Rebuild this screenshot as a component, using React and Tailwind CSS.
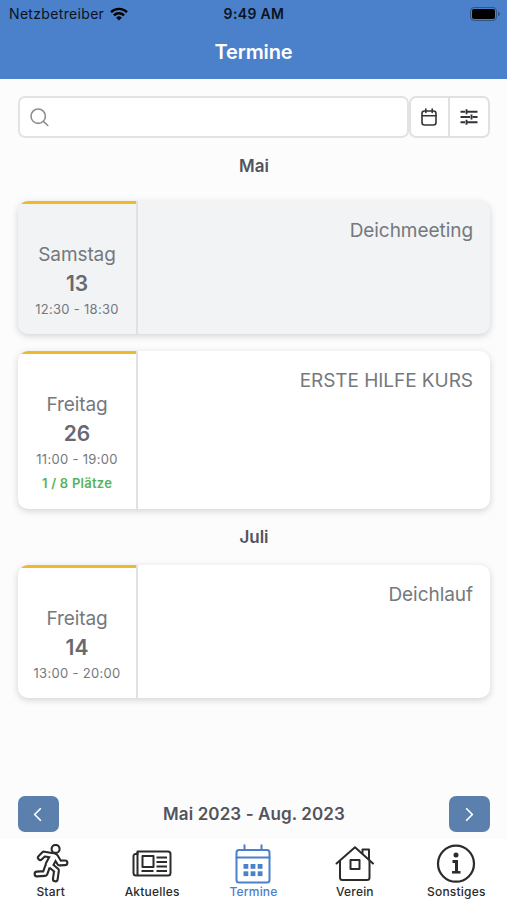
import { ChevronLeft, ChevronRight } from "lucide-react";

const months = [
  {
    name: "Mai",
    events: [
      { day: "Samstag", date: "13", time: "12:30 - 18:30", title: "Deichmeeting", past: true },
      { day: "Freitag", date: "26", time: "11:00 - 19:00", title: "ERSTE HILFE KURS", seats: "1 / 8 Plätze" },
    ],
  },
  {
    name: "Juli",
    events: [{ day: "Freitag", date: "14", time: "13:00 - 20:00", title: "Deichlauf" }],
  },
];

const RunnerIcon = () => {
  // each limb is drawn twice, so that the wide dark line outlines the white one
  const limbs = "M7.3 13.6 L11 10 L20 11.5 M14.5 22.5 L12 29.5 L4 30 M17 21 L23.5 26.5 L22.3 35 M22.5 12.5 L26.5 19 L32 18.8";
  return (
    <svg className="ml-px" width="37" height="40" viewBox="0 0 37 40" fill="none" strokeLinecap="round" strokeLinejoin="round">
      <path d={limbs} stroke="#2b2b2b" strokeWidth="6.8" />
      <path d="M20.5 13 L16.5 20.5" stroke="#2b2b2b" strokeWidth="9.6" />
      <path d={limbs} stroke="#fff" strokeWidth="2.6" />
      <path d="M20.5 13 L16.5 20.500" stroke="#fff" strokeWidth="5.4" />
      <circle cx="22.600" cy="4.900" r="4" fill="#fff" stroke="#2b2b2b" strokeWidth="2.1" />
    </svg>
  );
};

const NewsIcon = () => (
  <svg width="40" height="40" viewBox="0 0 40 40" fill="none" stroke="#2b2b2b" strokeWidth="2" strokeLinejoin="round">
    <path d="M5.500 7.500 H36 a2.500 2.500 0 0 1 2.500 2.500 V29 a2.500 2.500 0 0 1 -2.500 2.500 H4 a2.500 2.500 0 0 1 -2.500 -2.500 V12 a2 2 0 0 1 2 -2 H5.500 Z" />
    <path d="M5.500 8 V31" />
    <rect x="10.500" y="12" width="11" height="11" />
    <path d="M24.500 13.500 H35 M24.500 18 H35 M24.500 22.500 H35 M9.500 27 H21.500 M24.500 27 H35" />
  </svg>
);

const CalendarIcon = () => (
  <svg width="36" height="40" viewBox="0 0 36 40" fill="none" stroke="#4b80cb" strokeWidth="2" strokeLinecap="round">
    <rect x="1.500" y="6" width="33" height="32.500" rx="2.500" />
    <path d="M1.500 13.500 H34.500 M9.500 1.200 V6 M26.500 1.200 V6" />
    <g fill="#4b80cb" stroke="none">
      <rect x="8.500" y="20" width="4.800" height="4.800" />
      <rect x="15.600" y="20" width="4.800" height="4.800" />
      <rect x="22.700" y="20" width="4.800" height="4.800" />
      <rect x="8.500" y="27.300" width="4.800" height="4.800" />
      <rect x="15.600" y="27.300" width="4.800" height="4.800" />
      <rect x="22.700" y="27.300" width="4.800" height="4.800" />
    </g>
  </svg>
);

const HouseIcon = () => (
  <svg width="40" height="40" viewBox="0 0 40 40" fill="none" stroke="#2b2b2b" strokeWidth="2" strokeLinecap="round" strokeLinejoin="round">
    <path d="M1.500 19.500 L20 3.300 L38 19.500" />
    <path d="M5 17 V33.500 a2.500 2.500 0 0 0 2.500 2.500 H32 a2.500 2.500 0 0 0 2.500 -2.500 V17" />
    <path d="M27.500 9 V5.500 H34 V15" />
    <rect x="15.500" y="16" width="9" height="9" />
  </svg>
);

const InfoIcon = () => (
  <svg width="40" height="40" viewBox="0 0 40 40" fill="none" stroke="#2b2b2b">
    <circle cx="20" cy="19.700" r="18" strokeWidth="2.2" />
    <circle cx="20" cy="11" r="2.500" fill="#2b2b2b" stroke="none" />
    <path d="M16.500 17.500 H20.500 V28.500" strokeWidth="3" />
    <path d="M16 28.300 H24.500" strokeWidth="2.500" />
  </svg>
);

const tabs = [
  { label: "Start", icon: <RunnerIcon /> },
  { label: "Aktuelles", icon: <NewsIcon /> },
  { label: "Termine", icon: <CalendarIcon />, active: true },
  { label: "Verein", icon: <HouseIcon /> },
  { label: "Sonstiges", icon: <InfoIcon /> },
];

function Header() {
  return (
    <header className="h-[79px] bg-[#4b80cb]">
      <div className="grid h-[27px] grid-cols-3 items-center pl-[9px] pr-[7px] text-[14px] text-[#0b1320]">
        <div className="flex items-center gap-1.5 tracking-[0.33px]">
          Netzbetreiber
          <svg width="18" height="14" viewBox="0 0 18 14" fill="none" stroke="#000" strokeWidth="2.4">
            <path d="M1 5.200 a11.300 11.300 0 0 1 16 0" />
            <path d="M3.900 8.400 a7.200 7.200 0 0 1 10.200 0" />
            <path d="M9 13.500 L6.200 10.700 a4 4 0 0 1 5.600 0 Z" fill="#000" stroke="none" />
          </svg>
        </div>
        <div className="pr-px text-center font-semibold tracking-[0.35px]">9:49 AM</div>
        <div className="flex items-center justify-end gap-px">
          <div className="h-[14px] w-[27px] rounded-[4px] border border-[#315587] p-px">
            <div className="h-full rounded-[2px] bg-black" />
          </div>
          <div className="h-1 w-[2px] rounded-r-full bg-[#315587]" />
        </div>
      </div>
      <h1 className="pt-[10px] text-center text-[20px] leading-[30px] font-semibold tracking-[-0.15px] text-white">Termine</h1>
    </header>
  );
}

function SearchBar() {
  return (
    <div className="flex h-[42px]">
      <div className="flex flex-1 items-center rounded-[7px] border-2 border-[#e2e3e4] bg-white pl-[10px]">
        <svg width="19" height="19" viewBox="0 0 19 19" fill="none" stroke="#8e8e92" strokeWidth="1.6" strokeLinecap="round">
          <circle cx="8.200" cy="8.200" r="7.200" />
          <path d="M13.400 13.400 L17.800 17.500" />
        </svg>
      </div>
      <button className="flex w-[41px] items-center justify-center rounded-l-[7px] border-2 border-[#dfe1e3] bg-white pr-px">
        <svg width="16" height="18" viewBox="0 0 16 18" fill="none" stroke="#333438" strokeWidth="1.6" strokeLinecap="round">
          <rect x="1" y="3" width="14" height="14" rx="2.500" />
          <path d="M1 7.700 H15 M4.800 1 V4.500 M11.200 1 V4.500" />
        </svg>
      </button>
      <button className="flex w-10 items-center justify-center rounded-r-[7px] border-2 border-l-0 border-[#dfe1e3] bg-white">
        <svg width="18" height="16" viewBox="0 0 18 16" fill="none" stroke="#333438" strokeWidth="1.9">
          <path d="M0.500 2.800 H5 M6.500 2.800 H17.500 M0.500 8 H10 M12.500 8 H17.500 M0.500 13.200 H5 M6.500 13.200 H17.500" />
          <path d="M6.500 0.300 V5.300 M11.500 5.500 V10.500 M6.500 10.700 V15.700" />
        </svg>
      </button>
    </div>
  );
}

function EventCard({ event }) {
  return (
    <div
      className={`flex overflow-hidden rounded-[10px] shadow-[0_2px_7px_rgba(0,0,0,0.17)] ${
        event.seats ? "h-[158px]" : "h-[133px]"
      } ${event.past ? "bg-[#f1f3f5]" : "bg-white"}`}
    >
      <div className="flex w-[120px] flex-col border-r-2 border-[#e0e1e2] text-center text-[#75787d]">
        <div className="h-[3px] shrink-0 bg-[#f0b92c]" />
        <p className="mt-[38px] text-[19px] leading-[26px] tracking-[-0.1px]">{event.day}</p>
        <p className="mt-0.5 text-[21px] leading-[28px] font-semibold text-[#67696f]">{event.date}</p>
        <p className="mt-px text-[13px] leading-[20px] tracking-[0.3px]">{event.time}</p>
        {event.seats && (
          <p className="mt-1 text-[13px] leading-[20px] font-semibold tracking-[0.25px] text-[#55b45b]">{event.seats}</p>
        )}
      </div>
      <p className="flex-1 pt-[17px] pr-[17px] text-right text-[19px] leading-[26px] tracking-[-0.05px] text-[#75787d]">{event.title}</p>
    </div>
  );
}

export default function App() {
  return (
    <div className="flex h-[900px] w-full flex-col overflow-hidden bg-[#fcfcfd] font-['Inter',sans-serif]">
      <Header />
      <main className="flex flex-1 flex-col pt-[17px] pr-[17px] pl-[18px]">
        <SearchBar />
        {months.map((month, i) => (
          <section key={month.name} className="pt-[15px]">
            <h2 className="text-center text-[17px] leading-[26px] font-semibold text-[#53545c]">{month.name}</h2>
            <div className={`flex flex-col gap-[17px] ${i === 0 ? "pt-[22px]" : "pt-[15px]"}`}>
              {month.events.map((event) => (
                <EventCard key={event.date} event={event} />
              ))}
            </div>
          </section>
        ))}
        <div className="mt-auto mb-[7px] flex items-center justify-between">
          <button className="flex h-9 w-[41px] items-center justify-center rounded-[7px] bg-[#5b80ae] pr-0.5 text-white">
            <ChevronLeft size={23} strokeWidth={1.8} />
          </button>
          <p className="pt-px text-[17px] font-semibold tracking-[0.1px] text-[#53545c]">Mai 2023 - Aug. 2023</p>
          <button className="flex h-9 w-[41px] items-center justify-center rounded-[7px] bg-[#5b80ae] pl-px text-white">
            <ChevronRight size={23} strokeWidth={1.8} />
          </button>
        </div>
      </main>
      <nav className="grid h-[61px] grid-cols-5 bg-white pt-[5px]">
        {tabs.map((tab) => (
          <div key={tab.label} className={`flex flex-col items-center ${tab.active ? "text-[#4b80cb]" : "text-[#2b2b2b]"}`}>
            {tab.icon}
            <span className="text-[12px] leading-[15px] font-medium tracking-[0.2px]">{tab.label}</span>
          </div>
        ))}
      </nav>
    </div>
  );
}
